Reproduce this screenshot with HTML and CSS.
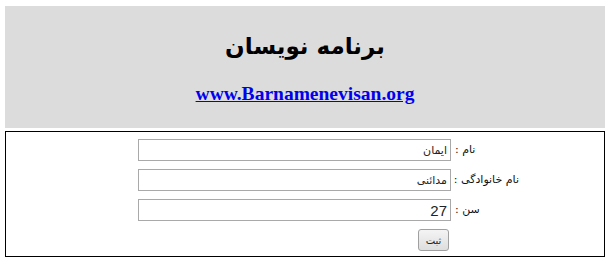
FILE: index.html
```html
<!DOCTYPE html>
<html lang="fa">
<head>
    <meta charset="UTF-8">
    <title>برنامه نویسان</title>
    <link rel="stylesheet" href="styles.css">
</head>
<body>
    <div class="header">
        <h1>برنامه نویسان</h1>
        <a class="site-link" href="#">www.Barnamenevisan.org</a>
    </div>
    <div class="form-box">
        <form class="person-form" dir="rtl">
            <label class="field-label" for="fname">نام :</label>
            <input class="field" id="fname" type="text" value="ایمان">

            <label class="field-label" for="lname">نام خانوادگی :</label>
            <input class="field" id="lname" type="text" value="مدائنی">

            <label class="field-label" for="age">سن :</label>
            <input class="field number" id="age" type="text" value="27">

            <span></span>
            <button class="submit-button" type="button">ثبت</button>
        </form>
    </div>
</body>
</html>
```

FILE: styles.css
```css
* {
    box-sizing: border-box;
}

body {
    margin: 0;
    padding: 6px 6px 0 5px;
    background: #ffffff;
    font-family: "Liberation Sans", "DejaVu Sans", sans-serif;
    color: #000;
}

.header {
    height: 122px;
    background: #dcdcdc;
    display: flex;
    flex-direction: column;
    align-items: center;
}

.header h1 {
    margin: 25px 0 0 0;
    font-family: "DejaVu Sans", sans-serif;
    font-size: 23px;
    font-weight: bold;
    line-height: 30px;
}

.site-link {
    margin-top: 22px;
    font-family: "Liberation Serif", serif;
    font-size: 19.5px;
    font-weight: bold;
    color: #0000ee;
    text-decoration: underline;
}

.form-box {
    margin-top: 3px;
    height: 126px;
    border: 1px solid #000;
}

.person-form {
    display: grid;
    grid-template-columns: 64px 313px;
    column-gap: 4px;
    row-gap: 8px;
    justify-content: start;
    padding: 7px 85px 0 0;
}

.field-label {
    text-align: left;
    white-space: nowrap;
    font-family: "DejaVu Sans", sans-serif;
    font-size: 11px;
    line-height: 22px;
    color: #111;
}

.field {
    width: 313px;
    height: 22px;
    border: 1px solid #a9a9a9;
    padding: 0 3px;
    font-family: "DejaVu Sans", sans-serif;
    font-size: 11px;
    color: #222;
    text-align: right;
}

.field.number {
    font-family: "Liberation Sans", sans-serif;
    font-size: 15px;
}

.submit-button {
    justify-self: start;
    width: 31px;
    height: 22px;
    margin-right: 2px;
    padding: 0;
    border: 1px solid #a0a0a0;
    border-radius: 3px;
    background: linear-gradient(to bottom, #f4f4f4, #dedede);
    font-family: "DejaVu Sans", sans-serif;
    font-size: 10px;
    color: #222;
}
```
